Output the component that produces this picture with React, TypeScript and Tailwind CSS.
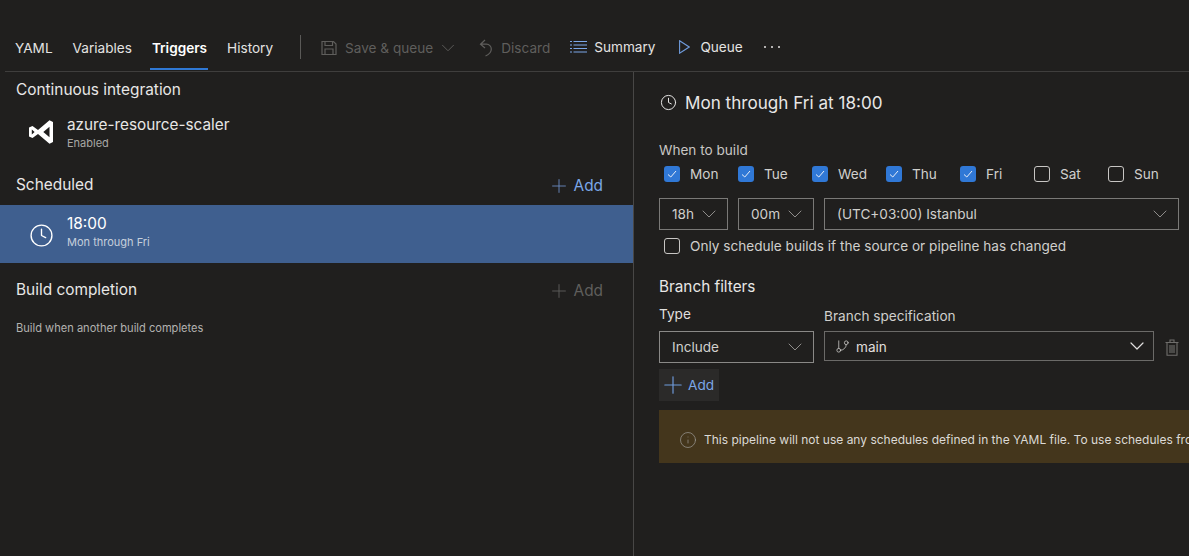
import { ChevronDown, Clock, Plus, Info, GitBranch } from "lucide-react";

const DAYS = [
  { label: "Mon", on: true },
  { label: "Tue", on: true },
  { label: "Wed", on: true },
  { label: "Thu", on: true },
  { label: "Fri", on: true },
  { label: "Sat", on: false },
  { label: "Sun", on: false },
];

function Check({ on }: { on: boolean }) {
  if (!on) return <span className="h-4 w-4 shrink-0 rounded-[3px] border border-[#c8c6c4]" />;
  return (
    <span className="flex h-4 w-4 shrink-0 items-center justify-center rounded-[3px] bg-[#3078d6]">
      <svg width="10" height="10" viewBox="0 0 10 10" fill="none" stroke="#e8eef8" strokeWidth="1">
        <path d="M1 5.5 3.8 8 9 2" />
      </svg>
    </span>
  );
}

function Select({ label, className }: { label: string; className: string }) {
  return (
    <div className={`flex h-8 items-center justify-between border border-[#7a7977] pl-[12px] pr-[6px] text-[13.6px] text-[#d0cfcd] ${className}`}>
      <span>{label}</span>
      <ChevronDown size={24} strokeWidth={1} className="text-[#8f8d8b]" />
    </div>
  );
}

export default function App() {
  return (
    <div className="flex h-[556px] w-[1189px] flex-col overflow-hidden bg-[#201f1e] font-['Inter',sans-serif] text-white">
      <div className="ml-[5px] flex h-[72px] shrink-0 items-end border-b border-[#3f3e3d] text-[13.6px] leading-5">
        <div className="flex h-[34px] items-start pl-[10px] text-[#e4e3e2]">
          <span className="mr-[20px] pt-[1px]">YAML</span>
          <span className="mr-[18px] pt-[1px]">Variables</span>
          <span className="mr-[18px] flex h-[34px] flex-col">
            <span className="px-[2px] pt-[1px] font-semibold text-white">Triggers</span>
            <span className="mt-[10px] h-[2px] w-[58px] bg-[#2f78d4]" />
          </span>
          <span className="pt-[1px]">History</span>
          <span className="ml-[27px] -mt-[2px] h-[24px] w-px bg-[#5a5957]" />
          <div className="ml-[20px] flex items-center text-[#5f5e5c]">
            <svg width="16" height="16" viewBox="0 0 16 16" fill="none" stroke="#5f5e5c" strokeWidth="1.2">
              <path d="M1 1.5h11.5L15 4v10.5H1zM4 1.5v4h7.5v-4M4 14.5V9h8v5.5" />
            </svg>
            <span className="ml-2">Save &amp; queue</span>
            <ChevronDown size={22} strokeWidth={1} className="ml-[4px]" />
            <svg className="ml-[20px]" width="16" height="18" viewBox="0 0 16 18" fill="none" stroke="#5f5e5c" strokeWidth="1.2">
              <path d="M6 1 1.5 5.2 6 9M1.5 5.2h6a4.8 4.8 0 0 1 4.8 4.8c0 3.5-2.5 5.6-5.8 7" />
            </svg>
            <span className="ml-[6px]">Discard</span>
          </div>
          <div className="ml-[20px] flex items-center text-[#e4e3e2]">
            <svg width="17" height="12" viewBox="0 0 17 12" stroke="#7ba7e8" strokeWidth="1">
              <path d="M3.5 .5H17M3.5 4H17M3.5 7.5H17M3.5 11H17" />
              <path d="M0 .5h2M0 4h2M0 7.5h2M0 11h2" />
            </svg>
            <span className="ml-[7px]">Summary</span>
            <svg className="ml-[24px]" width="11" height="14" viewBox="0 0 11 14" fill="none" stroke="#6f9bdc" strokeWidth="1.1">
              <path d="M.6.8 10.2 7 .6 13.2z" />
            </svg>
            <span className="ml-[10px]">Queue</span>
            <span className="ml-[21px] flex gap-[5px]">
              <span className="h-[2px] w-[2px] rounded-full bg-[#e4e3e2]" />
              <span className="h-[2px] w-[2px] rounded-full bg-[#e4e3e2]" />
              <span className="h-[2px] w-[2px] rounded-full bg-[#e4e3e2]" />
            </span>
          </div>
        </div>
      </div>

      <div className="flex min-h-0 flex-1">
        <div className="w-[633px] shrink-0">
          <div className="pl-[16px] pt-[7px] text-[15.4px] leading-[22px] text-[#e8e7e6]">Continuous integration</div>
          <div className="flex items-center pl-[29px] pt-[14px]">
            <svg className="-translate-y-[2px]" width="24" height="24" viewBox="0 0 24 24" fill="#fff">
              <path d="M20.5.3 24 2v20l-3.5 1.7L9 14l-5.5 4L0 16.5v-9L3.5 6 9 10zM2.8 9.6v4.8L5.6 12zM20.5 6.8 14.3 12l6.2 5.2z" fillRule="evenodd" />
            </svg>
            <div className="ml-[14px]">
              <div className="text-[15.3px] leading-5 text-[#e8e7e6]">azure-resource-scaler</div>
              <div className="text-[11px] leading-[17px] text-[#a8a7a5]">Enabled</div>
            </div>
          </div>
          <div className="mt-[22px] flex h-[22px] items-center justify-between pl-[16px] pr-[30px] text-[15.4px]">
            <span className="text-[#e8e7e6]">Scheduled</span>
            <span className="flex translate-y-[1px] items-center text-[#7ba7e8]">
              <Plus size={22} strokeWidth={1} className="mr-[4px] text-[#6a8bc0]" />Add
            </span>
          </div>
          <div className="mt-[9px] flex h-[58px] items-center bg-[#3f5f8f] pl-[29px]">
            <Clock size={25} strokeWidth={1.3} className="mt-[2px]" />
            <div className="mb-[3px] ml-[13px]">
              <div className="text-[15.4px] leading-5">18:00</div>
              <div className="text-[11px] leading-[17px] text-[#c6cfdc]">Mon through Fri</div>
            </div>
          </div>
          <div className="mt-[16px] flex h-[22px] items-center justify-between pl-[16px] pr-[30px] text-[15.4px]">
            <span className="text-[#e8e7e6]">Build completion</span>
            <span className="flex translate-y-[1px] items-center text-[#5f5e5c]">
              <Plus size={22} strokeWidth={1} className="mr-[4px]" />Add
            </span>
          </div>
          <div className="mt-[19px] pl-[16px] text-[11.1px] leading-4 text-[#b3b2b0]">Build when another build completes</div>
        </div>

        <div className="min-w-0 flex-1 overflow-hidden border-l border-[#484746] pl-[25px] pt-[19px]">
          <div className="flex items-center pl-[1px] text-[17.1px] leading-6 text-[#e8e7e6]">
            <Clock size={17} strokeWidth={1.4} className="mr-[8px] -translate-y-[1px]" />
            Mon through Fri at 18:00
          </div>
          <div className="mt-[25px] text-[13.6px] leading-5 text-[#c8c6c4]">When to build</div>
          <div className="mt-[4px] flex h-[20px] items-center pl-[5px] text-[13.6px] text-[#d0cfcd]">
            {DAYS.map((d) => (
              <div key={d.label} className="flex w-[74px] items-center">
                <Check on={d.on} />
                <span className="ml-[10px]">{d.label}</span>
              </div>
            ))}
          </div>
          <div className="mt-[14px] flex gap-[10px]">
            <Select label="18h" className="w-[69px]" />
            <Select label="00m" className="w-[76px]" />
            <Select label="(UTC+03:00) Istanbul" className="w-[355px]" />
          </div>
          <div className="mt-[6px] flex h-[20px] items-center pl-[5px] text-[13.6px] text-[#d0cfcd]">
            <Check on={false} />
            <span className="ml-[10px]">Only schedule builds if the source or pipeline has changed</span>
          </div>
          <div className="mt-[21px] text-[15.3px] leading-5 text-[#e8e7e6]">Branch filters</div>
          <div className="mt-[7px] flex gap-[10px]">
            <div className="w-[155px]">
              <div className="text-[13.6px] leading-5 text-[#e0dfde]">Type</div>
              <Select label="Include" className="mt-[7px] w-[155px] border-[#8a8987]" />
            </div>
            <div>
              <div className="pt-[2px] text-[13.6px] leading-5 text-[#d0cfcd]">Branch specification</div>
              <div className="mt-[5px] flex items-center">
                <div className="flex h-[30px] w-[330px] items-center justify-between border border-[#6b6a68] pl-[10px] pr-[4px] text-[13.6px] text-[#e0dfde]">
                  <span className="flex translate-y-[1px] items-center">
                    <GitBranch size={15} strokeWidth={1.3} className="mr-[6px] text-[#c8c6c4]" />main
                  </span>
                  <ChevronDown size={24} strokeWidth={1.2} className="text-[#e0dfde]" />
                </div>
                <svg className="ml-[11px] mt-[2px]" width="14" height="17" viewBox="0 0 14 17" fill="none" stroke="#6f6e6c" strokeWidth="1.1">
                  <path d="M.5 3.5h13M5 3.5V1h4v2.5M2 3.5v12.8h10V3.5M5 6v8M7 6v8M9 6v8" />
                </svg>
              </div>
            </div>
          </div>
          <div className="mt-[6px] flex h-[32px] w-[60px] items-center bg-[#2b2a29] text-[13.6px] text-[#7ba7e8]">
            <Plus size={28} strokeWidth={1} className="mr-[1px] text-[#6f9bdc]" />Add
          </div>
          <div className="mt-[9px] flex h-[53px] w-[560px] items-center bg-[#44361c] pl-[20px] pt-[7px] text-xs text-[#dcdad6]">
            <Info size={18} strokeWidth={0.9} className="mr-[7px] shrink-0 text-[#a19f9d]" />
            <span className="whitespace-nowrap">This pipeline will not use any schedules defined in the YAML file. To use schedules from the YAML file, remove this trigger.</span>
          </div>
        </div>
      </div>
    </div>
  );
}
